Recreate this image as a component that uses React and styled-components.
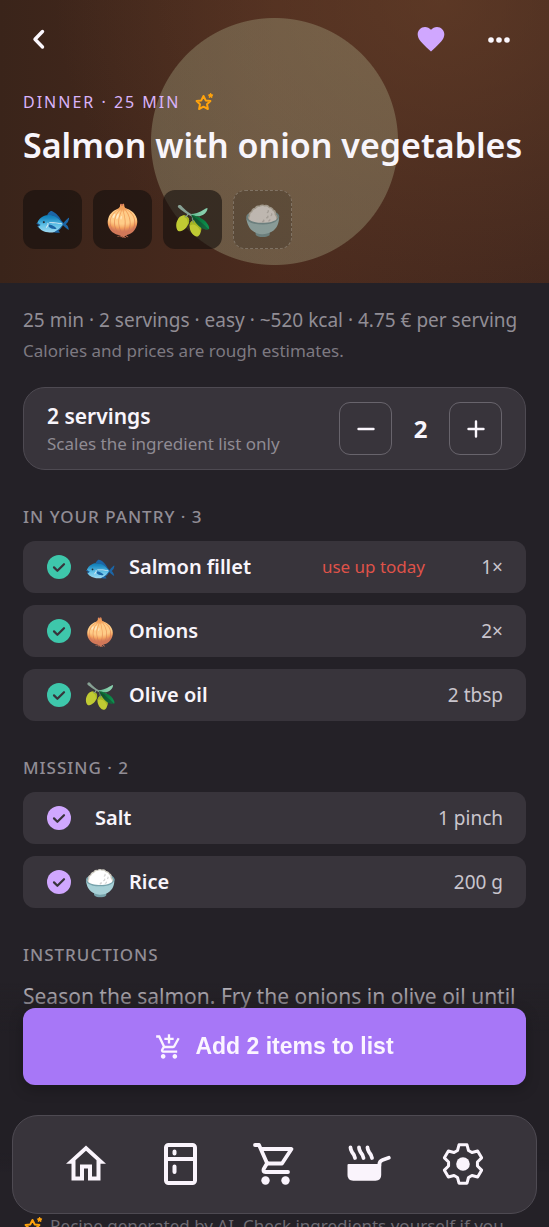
import React, { useState } from 'react';
import styled, { createGlobalStyle } from 'styled-components';
import { MdFavorite, MdOutlineAddShoppingCart } from 'react-icons/md';

const GlobalStyle = createGlobalStyle`
  * {
    box-sizing: border-box;
  }
  body {
    margin: 0;
    background: #242127;
    color: #f8f5fb;
    font-family: "Noto Sans", sans-serif;
  }
  h1, h2, p, ul {
    margin: 0;
    padding: 0;
  }
  svg {
    display: block;
  }
`;

const Screen = styled.div`
  height: 100vh;
  overflow: hidden;
`;

const Hero = styled.header`
  padding: 12px 23px 34px;
  background:
    radial-gradient(circle 124px at 50% 50%, rgba(172, 174, 138, 0.35) 123px, transparent 124px),
    radial-gradient(ellipse 70% 110% at 80% 0%, rgba(106, 66, 42, 0.6), transparent),
    linear-gradient(90deg, #3a241a 0%, #4b2b1e 50%, #43281e 100%);
`;

const TopBar = styled.div`
  display: flex;
  align-items: center;
  height: 54px;
  gap: 14px;
`;

const IconButton = styled.button`
  display: flex;
  align-items: center;
  justify-content: center;
  width: ${(props) => props.$width || "54px"};
  height: 54px;
  padding: 0;
  border: none;
  background: none;
  color: ${(props) => props.$color || "#fbf7fd"};
  margin-right: ${(props) => props.$push && "auto"};
  cursor: pointer;
`;

const Kicker = styled.p`
  display: flex;
  align-items: center;
  gap: 14px;
  margin-top: 24px;
  font-size: 16px;
  line-height: 24px;
  letter-spacing: 2px;
  color: #d9b3fa;
`;

const Title = styled.h1`
  margin-top: 9px;
  font-size: 34px;
  font-weight: 600;
  line-height: 44px;
  white-space: nowrap;
`;

const Chips = styled.ul`
  display: flex;
  gap: 11px;
  margin-top: 23px;
  list-style: none;
`;

const Chip = styled.li`
  display: flex;
  align-items: center;
  justify-content: center;
  width: 59px;
  height: 59px;
  border-radius: 12px;
  border: 1px ${(props) => (props.$missing ? "dashed rgba(255, 255, 255, 0.22)" : "solid transparent")};
  background: ${(props) => (props.$missing ? "rgba(40, 30, 24, 0.25)" : "rgba(20, 15, 14, 0.6)")};
  font-size: 30px;
  line-height: 36px;

  span {
    opacity: ${(props) => (props.$missing ? 0.6 : 1)};
  }
`;

const Content = styled.main`
  padding: 23px 23px 0;
`;

const Meta = styled.p`
  font-size: 19px;
  line-height: 28px;
  color: #918d95;
`;

const Note = styled.p`
  margin-top: 5px;
  font-size: 17px;
  line-height: 24px;
  color: #7d7981;
`;

const ServingsCard = styled.section`
  display: flex;
  align-items: center;
  justify-content: space-between;
  height: 83px;
  margin-top: 24px;
  padding: 0 23px;
  border: 1px solid #4e4a52;
  border-radius: 22px;
  background: #38343b;
`;

const ServingsTitle = styled.p`
  font-size: 21px;
  font-weight: 600;
  line-height: 28px;
`;

const ServingsHint = styled.p`
  margin-top: 2px;
  font-size: 17px;
  line-height: 24px;
  color: #8f8b93;
`;

const Stepper = styled.div`
  display: flex;
  align-items: center;
`;

const StepButton = styled.button`
  display: flex;
  align-items: center;
  justify-content: center;
  width: 53px;
  height: 53px;
  padding: 0;
  border: 1px solid #68646c;
  border-radius: 11px;
  background: none;
  color: #fbf7fd;
  cursor: pointer;
`;

const StepValue = styled.output`
  width: 57px;
  text-align: center;
  font-size: 24px;
  font-weight: 700;
  line-height: 32px;
`;

const SectionTitle = styled.h2`
  margin-top: 35px;
  font-size: 17px;
  font-weight: 500;
  line-height: 24px;
  letter-spacing: 1px;
  text-transform: uppercase;
  color: #918d95;
`;

const List = styled.ul`
  display: flex;
  flex-direction: column;
  gap: 12px;
  margin-top: 12px;
  list-style: none;
`;

const Row = styled.li`
  display: flex;
  align-items: center;
  gap: 12px;
  height: 52px;
  padding: 0 23px 0 24px;
  border-radius: 12px;
  background: #38343b;
`;

const CheckLabel = styled.label`
  display: grid;
  width: 24px;
  height: 24px;
  color: ${(props) => props.$color};

  input, svg {
    grid-area: 1 / 1;
    width: 24px;
    height: 24px;
    margin: 0;
  }
  input {
    opacity: 0;
  }
`;

const Emoji = styled.span`
  display: flex;
  justify-content: center;
  width: 34px;
  font-size: 26px;
  line-height: 32px;
`;

const Name = styled.span`
  flex: 1;
  font-size: 20px;
  font-weight: 600;
  line-height: 28px;
`;

const Warning = styled.span`
  font-size: 17px;
  line-height: 24px;
  color: #df5249;
`;

const Amount = styled.span`
  min-width: 66px;
  text-align: right;
  font-size: 19px;
  line-height: 28px;
  color: #c9c5cd;
`;

const Steps = styled.p`
  min-height: 204px;
  margin-top: 12px;
  font-size: 21px;
  line-height: 34px;
  color: #c4c0c8;
`;

const AiNote = styled.p`
  display: flex;
  align-items: center;
  gap: 5px;
  margin-top: 29px;
  font-size: 17px;
  line-height: 28px;
  color: #6f6b73;
`;

const Dock = styled.div`
  position: fixed;
  left: 0;
  right: 0;
  bottom: 13px;
  padding: 25px 12px 0;
  background: linear-gradient(rgba(36, 33, 39, 0) 0, rgba(34, 31, 36, 0.5) 25px, #221f25 50px, #221f25 170px, rgba(34, 31, 36, 0) 190px);
`;

const AddButton = styled.button`
  display: flex;
  align-items: center;
  justify-content: center;
  gap: 12px;
  width: calc(100% - 22px);
  height: 77px;
  margin: 0 11px 30px;
  border: none;
  border-radius: 12px;
  background: #a777f7;
  box-shadow: 0 4px 14px rgba(0, 0, 0, 0.25);
  color: #fbf5ff;
  font-family: "Liberation Sans", Arial, sans-serif;
  font-size: 23px;
  font-weight: 700;
  cursor: pointer;
`;

const Nav = styled.nav`
  display: flex;
  height: 99px;
  padding: 0 26px 2px;
  border: 1px solid #4e4a52;
  border-radius: 26px;
  background: #38343b;
`;

const NavLink = styled.a`
  display: flex;
  flex: 1;
  align-items: center;
  justify-content: center;
  color: #faf4fc;
`;

const line = { fill: 'none', stroke: 'currentColor', strokeLinecap: 'round', strokeLinejoin: 'round' };

const StarIcon = () => (
  <svg width="22" height="22" viewBox="0 0 22 22" fill="none" stroke="#ffa30c" strokeWidth="2" strokeLinejoin="round" aria-hidden="true">
    <path d="M9.5 5 L11.7 9.4 L16.4 10 L13 13.2 L13.9 18 L9.5 15.7 L5.1 18 L6 13.2 L2.6 10 L7.3 9.4 Z" />
    <path d="M16.6 2.2 L17.3 3.6 L18.8 3.9 L17.8 5 L18 6.5 L16.6 5.8 L15.2 6.5 L15.4 5 L14.4 3.9 L15.9 3.6 Z" fill="#ffa30c" strokeWidth="1" />
  </svg>
);

const CheckIcon = () => (
  <svg viewBox="0 0 24 24" aria-hidden="true">
    <circle cx="12" cy="12" r="12" fill="currentColor" />
    <path d="M7 12.4 L10.4 15.8 L17 9.2" fill="none" stroke="#38343b" strokeWidth="2.2" strokeLinecap="round" strokeLinejoin="round" />
  </svg>
);

const HomeIcon = () => (
  <svg width="44" height="44" viewBox="0 0 44 44" fill="currentColor" fillRule="evenodd" aria-hidden="true">
    <path d="M22 3.5 L42 21.800 H36.500 V38.500 H24 V26.500 H20 V38.500 H7.500 V21.800 H2 Z M22 8.800 L11.500 18.300 V34.500 H16 V22.500 H28 V34.500 H32.500 V18.300 Z" />
  </svg>
);

const FridgeIcon = () => (
  <svg width="44" height="44" viewBox="0 0 44 44" {...line} strokeWidth="4" aria-hidden="true">
    <rect x="8" y="3" width="29" height="38" rx="2.5" />
    <path d="M8.500 17 H36.500 M16.500 9.500 V11.500 M16.500 24.500 V30" />
  </svg>
);

const CartIcon = () => (
  <svg width="44" height="44" viewBox="0 0 44 44" {...line} strokeWidth="3.8" aria-hidden="true">
    <path d="M2 3 H6 L14.200 21.500 H29 L38.500 7 H9" />
    <path d="M14.200 21 L10.700 27 Q9.500 30 12.500 30 H35" />
    <circle cx="12.500" cy="38.500" r="4.200" fill="currentColor" stroke="none" />
    <circle cx="32.500" cy="38.500" r="4.200" fill="currentColor" stroke="none" />
  </svg>
);

const PanIcon = () => (
  <svg width="44" height="44" viewBox="0 0 44 44" {...line} strokeWidth="3.8" aria-hidden="true">
    <path d="M32.300 24 V22.500 Q32.500 19 35.500 18 L41.800 15.800" />
    <path d="M0.500 23 Q0.500 22 1.500 22 H34.200 V33 Q34.200 38.700 28.500 38.700 H6.200 Q0.500 38.700 0.500 33 Z" fill="currentColor" stroke="none" />
    <path d="M3.500 5.500 Q3.500 7.500 5 10 Q7.500 13 8 16 M12 5.500 Q12 7.500 13.500 10 Q16 13 16.500 16 M20.500 5.500 Q20.500 7.500 22 10 Q24.500 13 25 16" />
  </svg>
);

const tooth = [[-5.5, -13.5], [-4, -19.2], [4, -19.2], [5.5, -13.5]];

const gearPoints = [0, 60, 120, 180, 240, 300].flatMap((deg) => {
  const a = (deg * Math.PI) / 180;
  return tooth.map(([x, y]) =>
    `${(22 + x * Math.cos(a) - y * Math.sin(a)).toFixed(2)},${(22 + x * Math.sin(a) + y * Math.cos(a)).toFixed(2)}`
  );
}).join(' ');

const GearIcon = () => (
  <svg width="44" height="44" viewBox="0 0 44 44" {...line} strokeWidth="3" aria-hidden="true">
    <polygon points={gearPoints} />
    <circle cx="22" cy="22" r="6.8" fill="currentColor" stroke="none" />
  </svg>
);

const chips = [
  { icon: '🐟' },
  { icon: '🧅' },
  { icon: '🫒' },
  { icon: '🍚', missing: true },
];

const pantry = [
  { icon: '🐟', name: 'Salmon fillet', amount: '1×', warning: 'use up today' },
  { icon: '🧅', name: 'Onions', amount: '2×' },
  { icon: '🫒', name: 'Olive oil', amount: '2 tbsp' },
];

const missing = [
  { name: 'Salt', amount: '1 pinch' },
  { icon: '🍚', name: 'Rice', amount: '200 g' },
];

const navItems = [
  { label: 'Home', Icon: HomeIcon },
  { label: 'Pantry', Icon: FridgeIcon },
  { label: 'Shopping list', Icon: CartIcon },
  { label: 'Recipes', Icon: PanIcon },
  { label: 'Settings', Icon: GearIcon },
];

function Ingredient({ item, color }) {
  return (
    <Row>
      <CheckLabel $color={color}>
        <input type="checkbox" defaultChecked aria-label={item.name} />
        <CheckIcon />
      </CheckLabel>
      {item.icon ? <Emoji>{item.icon}</Emoji> : <span />}
      <Name>{item.name}</Name>
      {item.warning && <Warning>{item.warning}</Warning>}
      <Amount>{item.amount}</Amount>
    </Row>
  );
}

function App() {
  const [servings, setServings] = useState(2);

  return (
    <Screen>
      <GlobalStyle />
      <Hero>
        <TopBar>
          <IconButton $width="32px" $push aria-label="Back">
            <svg width="24" height="24" viewBox="0 0 24 24" {...line} strokeWidth="3.4">
              <path d="M15.5 4.500 L8 12.300 L15.500 20" />
            </svg>
          </IconButton>
          <IconButton $color="#d0a7ff" aria-label="Favorite">
            <MdFavorite size={32} />
          </IconButton>
          <IconButton aria-label="More">
            <svg width="24" height="24" viewBox="0 0 24 24" fill="currentColor">
              <circle cx="4" cy="13" r="2.8" />
              <circle cx="12" cy="13" r="2.8" />
              <circle cx="20" cy="13" r="2.8" />
            </svg>
          </IconButton>
        </TopBar>
        <Kicker>DINNER · 25 MIN <StarIcon /></Kicker>
        <Title>Salmon with onion vegetables</Title>
        <Chips>
          {chips.map((chip) => (
            <Chip key={chip.icon} $missing={chip.missing}><span>{chip.icon}</span></Chip>
          ))}
        </Chips>
      </Hero>

      <Content>
        <Meta>25 min · 2 servings · easy · ~520 kcal · 4.75 € per serving</Meta>
        <Note>Calories and prices are rough estimates.</Note>

        <ServingsCard>
          <div>
            <ServingsTitle>{servings} servings</ServingsTitle>
            <ServingsHint>Scales the ingredient list only</ServingsHint>
          </div>
          <Stepper>
            <StepButton aria-label="Fewer servings" onClick={() => setServings(Math.max(1, servings - 1))}>
              <svg width="24" height="24" viewBox="0 0 24 24" {...line} strokeWidth="2.4">
                <path d="M4.5 12 H19.5" />
              </svg>
            </StepButton>
            <StepValue>{servings}</StepValue>
            <StepButton aria-label="More servings" onClick={() => setServings(servings + 1)}>
              <svg width="24" height="24" viewBox="0 0 24 24" {...line} strokeWidth="2.4">
                <path d="M4.5 12 H19.5 M12 4.5 V19.5" />
              </svg>
            </StepButton>
          </Stepper>
        </ServingsCard>

        <SectionTitle>In your pantry · 3</SectionTitle>
        <List>
          {pantry.map((item) => <Ingredient key={item.name} item={item} color="#3ec7ab" />)}
        </List>

        <SectionTitle>Missing · 2</SectionTitle>
        <List>
          {missing.map((item) => <Ingredient key={item.name} item={item} color="#d0a7ff" />)}
        </List>

        <SectionTitle>Instructions</SectionTitle>
        <Steps>Season the salmon. Fry the onions in olive oil until</Steps>
        <AiNote><StarIcon /> Recipe generated by AI. Check ingredients yourself if you</AiNote>
      </Content>

      <Dock>
        <AddButton>
          <MdOutlineAddShoppingCart size={28} />
          Add 2 items to list
        </AddButton>
        <Nav>
          {navItems.map(({ label, Icon }) => (
            <NavLink key={label} href="#" aria-label={label}><Icon /></NavLink>
          ))}
        </Nav>
      </Dock>
    </Screen>
  );
}

export default App;
